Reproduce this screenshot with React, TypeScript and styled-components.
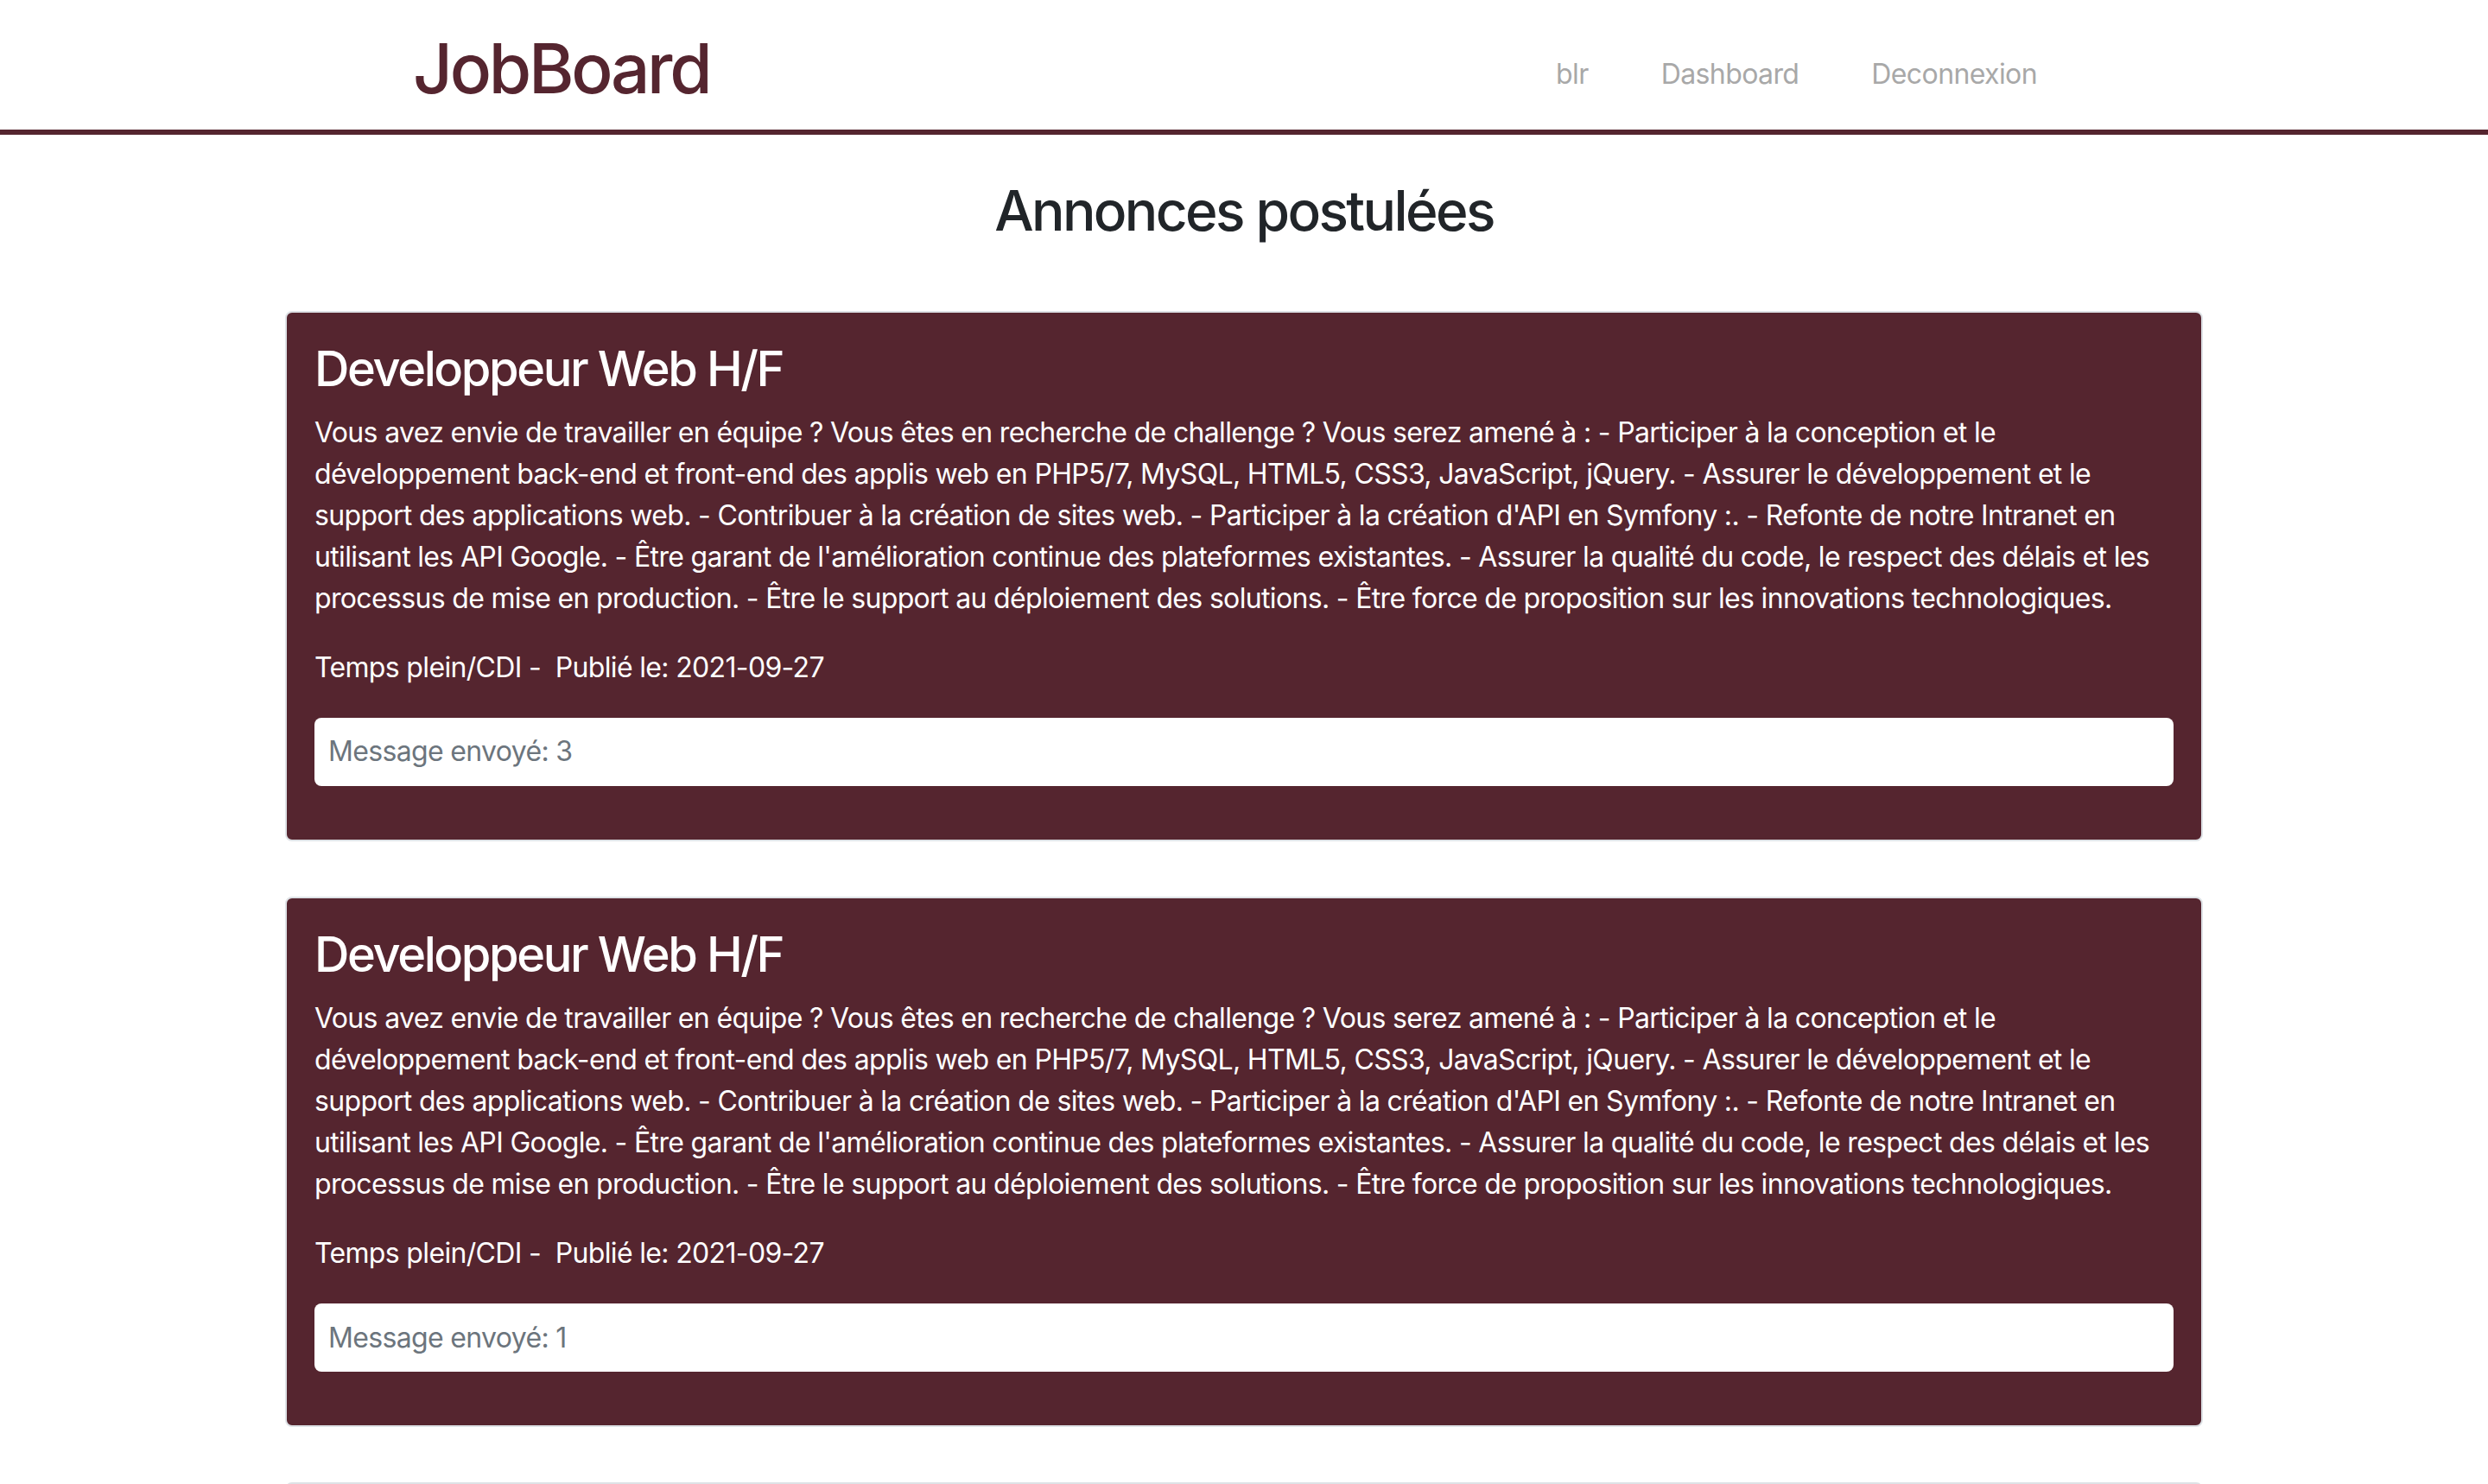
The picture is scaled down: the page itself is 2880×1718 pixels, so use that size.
import React from "react";
import styled, { createGlobalStyle } from "styled-components";

const Global = createGlobalStyle`
  html, body { margin: 0; padding: 0; background: #fff; }
  body {
    font-family: Inter, "Noto Sans", "Liberation Sans", sans-serif;
    color: #212529;
    font-size: 32px;
    line-height: 1.5;
    letter-spacing: -0.66px;
  }
  * { box-sizing: border-box; }
`;

const Header = styled.header`
  background: #fff;
  border-bottom: 6px solid #55252f;
`;

const HeaderInner = styled.div`
  height: 150px;
  display: flex;
  align-items: center;
  justify-content: space-between;
  padding: 0 480px 0 478px;
`;

const Brand = styled.a`
  font-size: 80px;
  font-weight: 500;
  color: #55252f;
  text-decoration: none;
  letter-spacing: -3.3px;
  line-height: 1;
  margin-top: 8px;
`;

const Nav = styled.nav`
  display: flex;
  align-items: center;
  margin-top: 22px;
`;

const NavLink = styled.a`
  color: #a8a8a8;
  font-size: 32px;
  letter-spacing: -0.6px;
  text-decoration: none;
  padding: 0 42px;
`;

const Main = styled.main`
  max-width: 2280px;
  margin: 0 auto;
  padding: 0 30px;
`;

const Title = styled.h2`
  text-align: center;
  font-size: 64px;
  font-weight: 500;
  letter-spacing: -2.6px;
  line-height: 1.2;
  margin: 50px 0 77px;
  color: #212529;
`;

const Card = styled.section`
  background: #55252f;
  border: 2px solid #dee2e6;
  border-radius: 8px;
  padding: 32px 32px 0;
  margin-bottom: 64px;
  color: #fff;
`;

const CardTitle = styled.h3`
  font-size: 56px;
  font-weight: 500;
  letter-spacing: -2.4px;
  line-height: 1.2;
  margin: 0 0 16px;
`;

const Description = styled.p`
  margin: 0 0 32px;
  font-size: 32px;
  line-height: 48px;
`;

const Meta = styled.p`
  margin: 0 0 34px;
`;

const MessageBox = styled.div`
  background: #fff;
  border-radius: 8px;
  height: 79px;
  display: flex;
  align-items: center;
  padding: 0 16px;
  color: #6c757d;
  margin-bottom: 62px;
`;

const description =
  "Vous avez envie de travailler en équipe ? Vous êtes en recherche de challenge ? Vous serez amené à : - Participer à la conception et le développement back-end et front-end des applis web en PHP5/7, MySQL, HTML5, CSS3, JavaScript, jQuery. - Assurer le développement et le support des applications web. - Contribuer à la création de sites web. - Participer à la création d'API en Symfony :. - Refonte de notre Intranet en utilisant les API Google. - Être garant de l'amélioration continue des plateformes existantes. - Assurer la qualité du code, le respect des délais et les processus de mise en production. - Être le support au déploiement des solutions. - Être force de proposition sur les innovations technologiques.";

const jobs = [
  { title: "Developpeur Web H/F", messages: 3 },
  { title: "Developpeur Web H/F", messages: 1 },
  { title: "Developpeur Web H/F", messages: 2 },
];

export default function App() {
  return (
    <>
      <Global />
      <Header>
        <HeaderInner>
          <Brand href="#">JobBoard</Brand>
          <Nav>
            <NavLink href="#">blr</NavLink>
            <NavLink href="#">Dashboard</NavLink>
            <NavLink href="#">Deconnexion</NavLink>
          </Nav>
        </HeaderInner>
      </Header>
      <Main>
        <Title>Annonces postulées</Title>
        {jobs.map((job, i) => (
          <Card key={i}>
            <CardTitle>{job.title}</CardTitle>
            <Description>{description}</Description>
            <Meta>Temps plein/CDI -{"\u00a0"} Publié le: 2021-09-27</Meta>
            <MessageBox>Message envoyé: {job.messages}</MessageBox>
          </Card>
        ))}
      </Main>
    </>
  );
}
